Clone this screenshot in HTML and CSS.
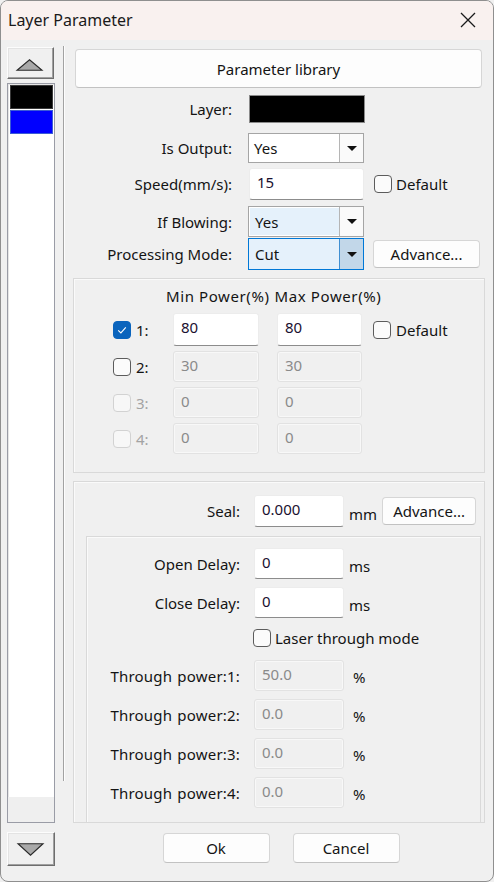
FILE: index.html
```html
<!DOCTYPE html>
<html lang="en">

<head>
  <meta charset="UTF-8">
  <meta name="viewport" content="width=device-width, initial-scale=1.0">
  <title>Layer Parameter</title>
  <link rel="stylesheet" href="styles.css">
</head>

<body>
  <div class="window">
    <div class="titlebar">
      <span class="title">Layer Parameter</span>
      <svg class="close" width="16" height="16" viewBox="0 0 16 16">
        <path d="M1 1 L15 15 M15 1 L1 15" stroke="#1a1a1a" stroke-width="1.3" fill="none" />
      </svg>
    </div>

    <div class="content">
      <!-- layer list on the left -->
      <div class="sidebar">
        <button class="arrow-btn">
          <svg width="47" height="32" viewBox="0 0 47 32">
            <polygon points="9.5,22.5 22.5,11.5 35.5,22.5" fill="#a9a9a9" stroke="#2b2b2b" stroke-width="1.2" />
          </svg>
        </button>
        <div class="layer-list">
          <div class="layer-item black"></div>
          <div class="layer-item blue"></div>
          <div class="list-fill"></div>
          <div class="list-foot"></div>
        </div>
        <button class="arrow-btn down">
          <svg width="48" height="34" viewBox="0 0 48 34">
            <polygon points="10.5,10.5 36.5,10.5 23.5,22.5" fill="#a9a9a9" stroke="#2b2b2b" stroke-width="1.2" />
          </svg>
        </button>
      </div>

      <div class="divider"></div>

      <div class="main">
        <button class="btn lib-btn">Parameter library</button>

        <div class="row row-layer">
          <span class="label">Layer:</span>
          <div class="color-box"></div>
        </div>

        <div class="row row-output">
          <span class="label">Is Output:</span>
          <div class="combo">
            <span class="combo-text">Yes</span>
            <span class="combo-btn"><i class="caret"></i></span>
          </div>
        </div>

        <div class="row row-speed">
          <span class="label">Speed(mm/s):</span>
          <div class="field speed-field">15</div>
          <label class="check-label"><span class="check"></span>Default</label>
        </div>

        <div class="row row-blow">
          <span class="label">If Blowing:</span>
          <div class="combo hot">
            <span class="combo-text">Yes</span>
            <span class="combo-btn"><i class="caret"></i></span>
          </div>
        </div>

        <div class="row row-mode">
          <span class="label">Processing Mode:</span>
          <div class="combo hot focus">
            <span class="combo-text">Cut</span>
            <span class="combo-btn"><i class="caret"></i></span>
          </div>
          <button class="btn adv-btn">Advance...</button>
        </div>

        <!-- power per laser head -->
        <div class="group power-group">
          <div class="power-head">
            <span class="head-min">Min Power(%)</span>
            <span class="head-max">Max Power(%)</span>
          </div>
          <div class="power-row first">
            <span class="check checked"><svg width="12" height="12" viewBox="0 0 12 12"><path d="M2.2 6.3 L4.9 8.9 L9.8 3.4" stroke="#fff" stroke-width="1.1" fill="none" /></svg></span>
            <span class="num">1:</span>
            <div class="field pw">80</div>
            <div class="field pw max">80</div>
            <label class="check-label pw-default"><span class="check"></span>Default</label>
          </div>
          <div class="power-row">
            <span class="check"></span>
            <span class="num">2:</span>
            <div class="field pw off">30</div>
            <div class="field pw max off">30</div>
          </div>
          <div class="power-row">
            <span class="check dim"></span>
            <span class="num dim-text">3:</span>
            <div class="field pw off">0</div>
            <div class="field pw max off">0</div>
          </div>
          <div class="power-row">
            <span class="check dim"></span>
            <span class="num dim-text">4:</span>
            <div class="field pw off">0</div>
            <div class="field pw max off">0</div>
          </div>
        </div>

        <!-- blowing / seal settings -->
        <div class="group seal-group">
          <div class="row seal-row">
            <span class="label">Seal:</span>
            <div class="field small">0.000</div>
            <span class="unit">mm</span>
            <button class="btn adv-btn seal-adv">Advance...</button>
          </div>

          <div class="group inner-group">
            <div class="row irow delay-open">
              <span class="label">Open Delay:</span>
              <div class="field small">0</div>
              <span class="unit">ms</span>
            </div>
            <div class="row irow delay-close">
              <span class="label">Close Delay:</span>
              <div class="field small">0</div>
              <span class="unit">ms</span>
            </div>
            <div class="row irow through-check">
              <span class="label"></span>
              <label class="check-label"><span class="check"></span>Laser through mode</label>
            </div>
            <div class="row irow tp tp1">
              <span class="label">Through power:1:</span>
              <div class="field small off">50.0</div>
              <span class="unit pct">%</span>
            </div>
            <div class="row irow tp">
              <span class="label">Through power:2:</span>
              <div class="field small off">0.0</div>
              <span class="unit pct">%</span>
            </div>
            <div class="row irow tp">
              <span class="label">Through power:3:</span>
              <div class="field small off">0.0</div>
              <span class="unit pct">%</span>
            </div>
            <div class="row irow tp">
              <span class="label">Through power:4:</span>
              <div class="field small off">0.0</div>
              <span class="unit pct">%</span>
            </div>
          </div>
        </div>

        <div class="footer">
          <button class="btn foot-btn">Ok</button>
          <button class="btn foot-btn">Cancel</button>
        </div>
      </div>
    </div>
  </div>
</body>

</html>
```

FILE: styles.css
```css
* {
  box-sizing: border-box;
}

body {
  margin: 0;
  padding: 0;
  font-family: 'Noto Sans', 'Open Sans', sans-serif;
  font-size: 15px;
  color: #141414;
  background: #f0f0f0;
}

.window {
  width: 494px;
  height: 882px;
  border: 1px solid #8f8f8f;
  border-radius: 8px;
  background: #f0f0f0;
  overflow: hidden;
}

.titlebar {
  height: 39px;
  background: #f9f1ef;
  display: flex;
  align-items: center;
  justify-content: space-between;
  padding: 0 17px 0 7px;
}

.title {
  font-size: 16px;
  color: #1a1a1a;
  margin-top: -1px;
}

.close {
  margin-top: -1px;
}

.content {
  display: flex;
}

/* ---------- sidebar ---------- */
.sidebar {
  width: 54px;
  padding-left: 6px;
  display: flex;
  flex-direction: column;
}

.arrow-btn {
  width: 47px;
  height: 32px;
  margin-top: 7px;
  padding: 0;
  background: #f0f0f0;
  border: 1px solid;
  border-color: #fcfcfc #6e6e6e #6e6e6e #fcfcfc;
  box-shadow: inset -1px -1px 0 #a0a0a0, inset 1px 1px 0 #e3e3e3;
  display: flex;
}

.arrow-btn.down {
  width: 48px;
  height: 34px;
  margin-top: 9px;
}

.layer-list {
  width: 48px;
  height: 740px;
  margin-top: 4px;
  border: 1px solid #9a9ca6;
  box-shadow: inset 1px 1px 0 #e6e6e6;
  background: #fff;
  display: flex;
  flex-direction: column;
  padding: 1px 1px 0 2px;
}

.layer-item {
  height: 24px;
  margin-bottom: 1px;
}

.layer-item.black {
  background: #000;
  border: 1px solid #3a3a3a;
}

.layer-item.blue {
  background: #0000ff;
  border: 1px solid #3b5bd6;
}

.list-fill {
  flex-grow: 1;
}

.list-foot {
  height: 25px;
  margin: 0 -1px 0 -2px;
  background: #efefef;
}

.divider {
  width: 2px;
  height: 735px;
  margin: 6px 0 0 8px;
  border-left: 1px solid #a2a2a2;
  border-right: 1px solid #fdfdfd;
}

/* ---------- main form ---------- */
.main {
  width: 412px;
  margin-left: 8px;
  display: flex;
  flex-direction: column;
}

.btn {
  font-family: inherit;
  font-size: 15px;
  color: #141414;
  background: #fdfdfd;
  border: 1px solid #d6d6d6;
  border-bottom-color: #c2c2c2;
  border-radius: 4px;
  padding: 0;
}

.lib-btn {
  width: 407px;
  height: 39px;
  margin: 9px 0 0 2px;
}

.row {
  display: flex;
  align-items: center;
}

.label {
  width: 159px;
  text-align: right;
  flex-shrink: 0;
}

.row-layer {
  height: 28px;
  margin-top: 7px;
}

.color-box {
  width: 116px;
  height: 28px;
  margin-left: 17px;
  background: #000;
  border: 1px solid #8a8a8a;
}

.row-output {
  height: 30px;
  margin-top: 10px;
}

.combo {
  width: 116px;
  height: 100%;
  margin-left: 16px;
  display: flex;
  border: 1px solid #a5a5a5;
  background: #fff;
}

.combo-text {
  flex-grow: 1;
  padding-left: 5px;
  display: flex;
  align-items: center;
}

.combo-btn {
  width: 24px;
  border-left: 1px solid #b5b5b5;
  display: flex;
  align-items: center;
  justify-content: center;
  background: #fafafa;
}

.caret {
  width: 0;
  height: 0;
  border-left: 5px solid transparent;
  border-right: 5px solid transparent;
  border-top: 5px solid #111;
  margin-left: 1px;
}

.combo.hot .combo-text {
  background: #e5f1fb;
  border: 1px solid #fff;
  border-right: none;
}

.combo.focus {
  border-color: #0078d7;
}

.combo.focus .combo-text {
  border-color: #e5f1fb;
}

.combo.focus .combo-btn {
  background: #c2d7e9;
  border-left-color: #3f8fd2;
}

.row-speed {
  height: 32px;
  margin-top: 5px;
}

.field {
  height: 100%;
  background: #fff;
  border: 1px solid #ececec;
  border-bottom: 1px solid #8c8c8c;
  border-radius: 3px;
  padding: 2px 0 0 7px;
  color: #1a1030;
  line-height: 22px;
}

.speed-field {
  width: 115px;
  margin-left: 17px;
}

.check-label {
  display: flex;
  align-items: center;
}

.row-speed .check-label {
  margin-left: 10px;
}

.check {
  width: 18px;
  height: 18px;
  border: 1px solid #5c5c5c;
  border-radius: 4px;
  background: #fbfbfb;
  margin-right: 4px;
  display: flex;
  align-items: center;
  justify-content: center;
  flex-shrink: 0;
}

.check.checked {
  background: #0a64bd;
  border-color: #0a64bd;
}

.check.dim {
  border-color: #d2d2d2;
  background: #f7f7f7;
}

.row-blow {
  height: 31px;
  margin-top: 6px;
}

.row-mode {
  height: 32px;
  margin-top: 1px;
}

.adv-btn {
  width: 107px;
  height: 28px;
  margin-left: 9px;
}

/* ---------- group boxes ---------- */
.group {
  border: 1px solid #d9d9d9;
  box-shadow: inset 1px 1px 0 #fafafa;
}

.power-group {
  height: 195px;
  margin-top: 8px;
  padding-top: 4px;
}

.power-head {
  height: 26px;
  display: flex;
  align-items: center;
  padding-left: 92px;
  letter-spacing: 0.6px;
}

.head-max {
  margin-left: 5px;
}

.power-row {
  height: 31px;
  margin-top: 5px;
  display: flex;
  align-items: center;
  padding-left: 39px;
}

.power-row.first {
  height: 33px;
  margin-top: 4px;
}

.power-row .check {
  margin-right: 5px;
}

.num {
  width: 37px;
}

.dim-text {
  color: #a3a3a3;
}

.pw {
  width: 86px;
}

.pw.max {
  width: 85px;
  margin-left: 18px;
}

.field.off {
  background: #f0f0f0;
  border: 1px solid #e2e2e2;
  box-shadow: inset 0 0 0 1px #f8f8f8;
  color: #8a8a8a;
}

.pw-default {
  margin-left: 11px;
}

.seal-group {
  height: 342px;
  margin-top: 8px;
  display: flex;
  flex-direction: column;
}

.seal-row {
  height: 32px;
  margin-top: 13px;
}

.seal-row .label {
  width: 166px;
}

.field.small {
  width: 90px;
  margin-left: 14px;
}

.unit {
  margin-left: 5px;
  margin-top: 5px;
}

.unit.pct {
  margin-left: 9px;
  margin-top: 3px;
}

.seal-adv {
  width: 94px;
  margin-left: 5px;
}

.inner-group {
  flex-grow: 1;
  margin: 9px 3px 0 12px;
  border-bottom: none;
}

.irow .label {
  width: 153px;
}

.tp .label {
  word-spacing: 1px;
  letter-spacing: 0.2px;
}

.delay-open {
  height: 31px;
  margin-top: 11px;
}

.delay-close {
  height: 31px;
  margin-top: 8px;
}

.through-check {
  height: 20px;
  margin-top: 10px;
}

.through-check .check-label {
  margin-left: 13px;
}

.tp {
  height: 31px;
  margin-top: 8px;
}

.tp1 {
  margin-top: 12px;
}

/* ---------- footer ---------- */
.footer {
  display: flex;
  justify-content: center;
  gap: 23px;
  margin-top: 10px;
  padding-left: 4px;
}

.foot-btn {
  width: 107px;
  height: 30px;
}
```
